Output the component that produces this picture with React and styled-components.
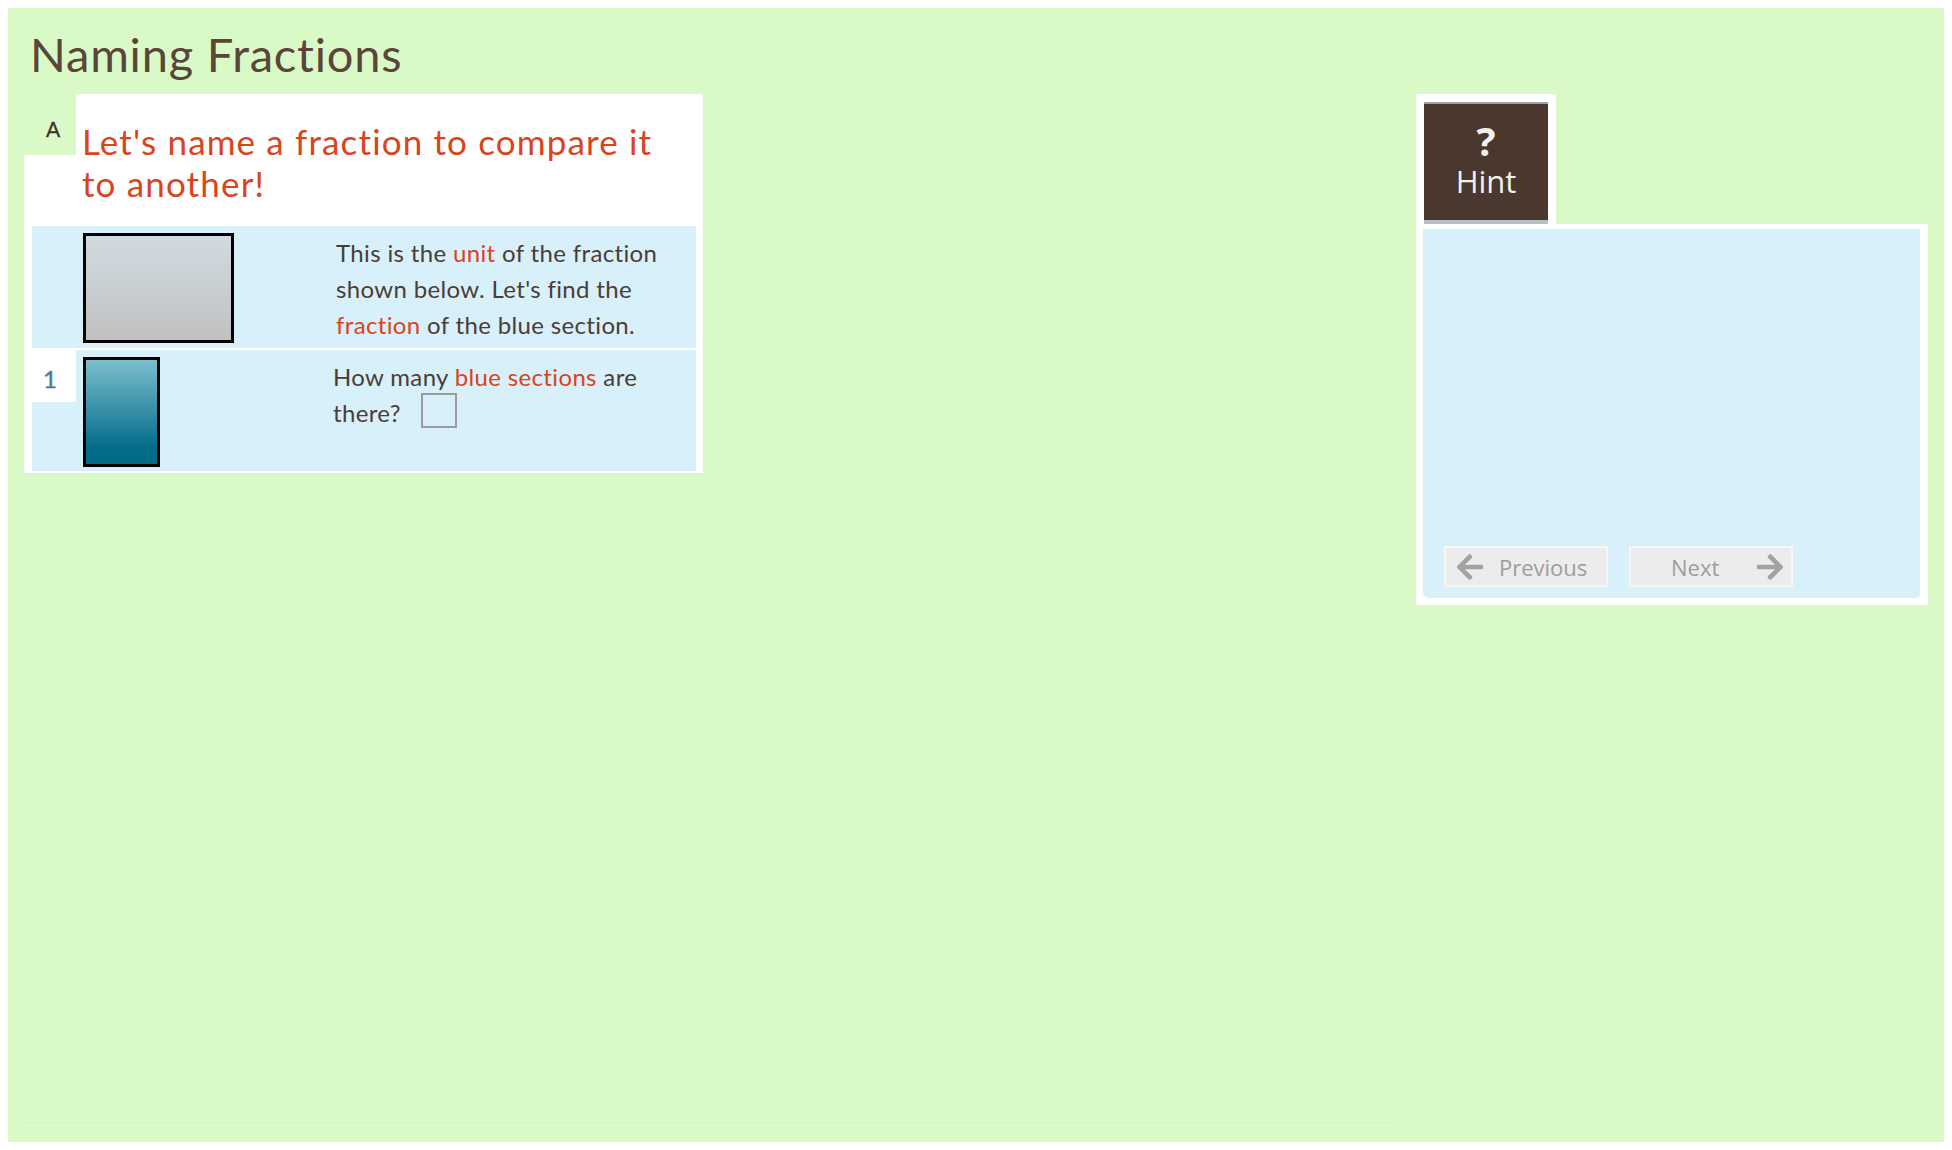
import React from 'react'
import styled, { createGlobalStyle } from 'styled-components'
import { FaArrowLeft, FaArrowRight } from 'react-icons/fa'

const GlobalStyle = createGlobalStyle`
  html, body {
    margin: 0;
    background: #ffffff;
  }
  body {
    padding: 8px;
    font-family: Lato, "Liberation Sans", sans-serif;
  }
  * {
    box-sizing: border-box;
  }
`

function App() {
  return (
    <>
      <GlobalStyle />
      <Page>
        <Title>Naming Fractions</Title>
        <Workspace>
          <Panel>
            <Header>
              <StepTab>A</StepTab>
              <HeaderText>Let's name a fraction to compare it to another!</HeaderText>
            </Header>
            <Rows>
              <Row h={122}>
                <NumberCell />
                <Figure>
                  <UnitBox />
                </Figure>
                <Text indent={4}>
                  This is the <Hl>unit</Hl> of the fraction shown below. Let's find the <Hl>fraction</Hl> of the blue section.
                </Text>
              </Row>
              <Row h={121}>
                <NumberCell filled>1</NumberCell>
                <Figure>
                  <SectionBox />
                </Figure>
                <Text indent={1}>
                  How many <Hl>blue sections</Hl> are there?<Answer type="text" />
                </Text>
              </Row>
            </Rows>
          </Panel>

          <HintColumn>
            <HintTab>
              <HintButton>
                <Question>?</Question>
                <HintLabel>Hint</HintLabel>
              </HintButton>
            </HintTab>
            <HintPanel>
              <HintBody>
                <NavRow>
                  <NavButton pl={9} pr={19}>
                    <FaArrowLeft size={30} />
                    <span>Previous</span>
                  </NavButton>
                  <NavButton pl={40} pr={6} spread>
                    <span>Next</span>
                    <FaArrowRight size={30} />
                  </NavButton>
                </NavRow>
              </HintBody>
            </HintPanel>
          </HintColumn>
        </Workspace>
        <FooterLine />
      </Page>
    </>
  )
}

export default App

const Page = styled.div`
  min-height: calc(100vh - 16px);
  background: #d9f9c7;
  padding: 0 16px;
  display: flex;
  flex-direction: column;
`

const Title = styled.h1`
  margin: 18px 0 12px;
  padding-left: 6px;
  font-family: Lato, "Liberation Sans", sans-serif;
  font-weight: normal;
  font-size: 47px;
  line-height: 1.2;
  letter-spacing: 0.8px;
  color: #5a4638;
`

const Workspace = styled.div`
  display: flex;
  justify-content: space-between;
  align-items: flex-start;
`

const Panel = styled.div`
  width: 679px;
  background: #ffffff;
`

const Header = styled.div`
  display: flex;
  align-items: flex-start;
  height: 132px;
`

const StepTab = styled.div`
  flex: 0 0 52px;
  height: 61px;
  background: #d9f9c7;
  padding: 22px 0 0 22px;
  font-size: 21px;
  line-height: 1.2;
  color: #3e312a;
  -webkit-text-stroke: 0.3px #3e312a;
`

const HeaderText = styled.h2`
  margin: 0;
  padding: 26px 36px 0 6px;
  font-weight: normal;
  font-size: 35px;
  line-height: 42px;
  letter-spacing: 1.15px;
  color: #d9441c;
`

const Rows = styled.div`
  display: flex;
  flex-direction: column;
  gap: 2px;
  padding: 0 7px 2px 8px;
`

const Row = styled.div`
  display: grid;
  grid-template-columns: 44px 256px 1fr;
  height: ${(p) => p.h}px;
  background: #d8f0fa;
`

const NumberCell = styled.div`
  height: 52px;
  background: ${(p) => (p.filled ? '#ffffff' : 'transparent')};
  display: flex;
  align-items: center;
  justify-content: center;
  padding: 4px 8px 0 0;
  font-size: 24px;
  color: #4a7c96;
  -webkit-text-stroke: 0.4px #4a7c96;
`

const Figure = styled.div`
  padding: 7px 0 0 7px;
`

const UnitBox = styled.div`
  width: 151px;
  height: 110px;
  border: 3px solid #000000;
  background: linear-gradient(to bottom, #d0dbe0, #c1c1c1);
`

const SectionBox = styled.div`
  width: 77px;
  height: 110px;
  border: 3px solid #000000;
  background: linear-gradient(to bottom, #7cbecf, #036c89 85%, #006b88);
`

const Text = styled.p`
  margin: 0;
  padding: 9px 18px 0 ${(p) => p.indent}px;
  font-size: 24px;
  line-height: 36px;
  letter-spacing: 0.35px;
  color: #4b3d35;
`

const Hl = styled.span`
  color: #d9441c;
`

const Answer = styled.input`
  display: inline-block;
  width: 36px;
  height: 35px;
  margin: -2px 0 0 20px;
  vertical-align: top;
  border: 2px solid #9b9b9b;
  background: transparent;
  padding: 0;
  outline: none;
`

const HintColumn = styled.div`
  width: 512px;
  display: flex;
  flex-direction: column;
`

const HintTab = styled.div`
  align-self: flex-start;
  width: 140px;
  background: #ffffff;
  padding: 8px 8px 0;
`

const HintButton = styled.div`
  height: 122px;
  background: #4a372d;
  border-top: 2px solid #93a3a9;
  border-bottom: 4px solid #b4bec3;
  display: flex;
  flex-direction: column;
  align-items: center;
  padding-top: 17px;
  gap: 5px;
  color: #f3f0ee;
  font-family: "Open Sans", "DejaVu Sans", sans-serif;
`

const Question = styled.div`
  font-size: 40px;
  font-weight: bold;
  line-height: 40px;
`

const HintLabel = styled.div`
  font-size: 31px;
  line-height: 31px;
`

const HintPanel = styled.div`
  background: #ffffff;
  padding: 5px 8px 7px 7px;
`

const HintBody = styled.div`
  height: 369px;
  background: #d8f0fa;
  border-radius: 0 0 4px 6px;
  display: flex;
  flex-direction: column;
  justify-content: flex-end;
  padding: 0 21px 11px;
`

const NavRow = styled.div`
  display: flex;
  gap: 21px;
`

const NavButton = styled.button`
  width: 164px;
  height: 41px;
  display: flex;
  align-items: center;
  justify-content: ${(p) => (p.spread ? 'space-between' : 'flex-start')};
  gap: 14px;
  padding: 0 ${(p) => p.pr}px 0 ${(p) => p.pl}px;
  background: #ececec;
  border: 2px solid #f6f6f6;
  color: #9d9d9d;
  font-family: "Open Sans", "DejaVu Sans", sans-serif;
  font-size: 22px;
  cursor: default;

  svg {
    color: #a2a2a2;
    flex: none;
  }
`

const FooterLine = styled.div`
  margin-top: auto;
  margin-bottom: 16px;
  width: 1370px;
  height: 1px;
  background: #e5fcda;
`
